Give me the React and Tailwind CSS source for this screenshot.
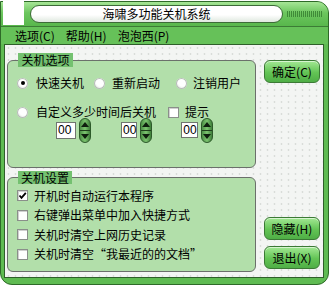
import React from "react";

function Radio({ checked }) {
  return (
    <span className="relative w-[11px] h-[11px] rounded-full shrink-0 bg-[radial-gradient(circle_at_60%_35%,#ffffff_0%,#ffffff_45%,#c9cfc9_100%)] shadow-[inset_0_0_0_1px_#b7bdb7] flex items-center justify-center">
      {checked && <span className="w-[4px] h-[4px] rounded-full bg-black" />}
    </span>
  );
}

function Check({ checked }) {
  return (
    <span className="w-[11px] h-[11px] shrink-0 bg-white border border-[#8a8f8a] shadow-[inset_1px_1px_0_#d0d0d0] flex items-center justify-center">
      {checked && (
        <svg width="9" height="9" viewBox="0 0 9 9">
          <polyline points="1.5,4.5 3.5,6.8 7.8,1.8" fill="none" stroke="#000" strokeWidth="1.8" />
        </svg>
      )}
    </span>
  );
}

function Spin() {
  return (
    <span className="w-[12px] h-[25px] rounded-full border border-[#2d5a2a] bg-[linear-gradient(90deg,#4c8f45,#7cc46f_50%,#3f7f3a)] flex flex-col items-center justify-between py-[3px] shrink-0">
      <svg width="8" height="5" viewBox="0 0 8 5"><polygon points="4,0 8,5 0,5" fill="#0f1f0e" /></svg>
      <span className="w-[10px] h-[1px] bg-[#1f3f1c]" />
      <svg width="8" height="5" viewBox="0 0 8 5"><polygon points="0,0 8,0 4,5" fill="#0f1f0e" /></svg>
    </span>
  );
}

function NumBox() {
  return (
    <span className="w-[20px] h-[17px] bg-white border border-[#6f756f] text-[12px] leading-[15px] pl-[1px] font-['Liberation_Sans',sans-serif] text-black">
      00
    </span>
  );
}

function Btn({ children }) {
  return (
    <div className="w-[56px] h-[23px] rounded-[6px] border border-[#3b7a35] bg-[linear-gradient(#a3e894,#63c455_55%,#4fae46)] shadow-[inset_0_1px_0_#d6f5cf] flex items-center justify-center text-[12px] text-black">
      {children}
    </div>
  );
}

export default function App() {
  return (
    <div className="w-[330px] h-[289px] bg-white relative overflow-hidden font-['Noto_Sans_CJK_SC','Noto_Sans',sans-serif] text-black">
      <div className="mt-[1px] w-[329px] h-[284px] border border-[#2e6a28] bg-[#5fbb52] rounded-tr-[12px] rounded-b-[12px] flex flex-col overflow-hidden">
        {/* Title bar */}
        <div className="h-[25px] shrink-0 border-b border-[#3c7c35] bg-[linear-gradient(#a6e596,#6cc65e_45%,#58b74c)] flex items-center">
          <div className="ml-[29px] w-[253px] h-[18px] rounded-full border border-[#3d6b38] bg-[linear-gradient(#ffffff,#ffffff_55%,#dfe8df)] flex items-center justify-center text-[12px] leading-none">
            海啸多功能关机系统
          </div>
          <div className="ml-[4px] w-[35px] h-[6px] bg-[repeating-linear-gradient(90deg,#3f8a38_0_1px,transparent_1px_2px)]" />
        </div>
        {/* Menu bar */}
        <div className="h-[17px] shrink-0 bg-[#66c159] flex items-center pl-[14px] gap-[11px] text-[12px] leading-none">
          <span>选项(C)</span>
          <span>帮助(H)</span>
          <span>泡泡西(P)</span>
        </div>
        {/* Content */}
        <div className="ml-[3px] mr-[4px] h-[234px] shrink-0 border border-[#2f5f2a] bg-[#f3f5f3] bg-[radial-gradient(#d9ddd9_1px,transparent_1.2px)] bg-[length:7px_6px] flex text-[12px] leading-none">
          {/* left column */}
          <div className="pl-[2px] w-[251px] flex flex-col">
            {/* group 1 */}
            <div className="relative mt-[15px] h-[108px] border border-[#6b706b] rounded-[6px] bg-[#b2dfaa]">
              <div className="absolute top-[-8px] left-[10px] h-[14px] w-[55px] bg-[#74c170] flex items-center justify-center text-[12px]">
                关机选项
              </div>
              <div className="mt-[15px] pl-[9px] flex items-center h-[14px]">
                <div className="w-[77px] flex items-center gap-[8px]"><Radio checked /><span>快速关机</span></div>
                <div className="w-[82px] flex items-center gap-[7px]"><Radio /><span>重新启动</span></div>
                <div className="flex items-center gap-[6px]"><Radio /><span>注销用户</span></div>
              </div>
              <div className="mt-[15px] pl-[9px] flex items-center h-[14px]">
                <div className="w-[151px] flex items-center gap-[8px]"><Radio /><span>自定义多少时间后关机</span></div>
                <div className="flex items-center gap-[6px]"><Check /><span>提示</span></div>
              </div>
              <div className="mt-[-1px] pl-[48px] flex items-center h-[25px]">
                <NumBox />
                <span className="ml-[3px]"><Spin /></span>
                <span className="ml-[30px]"><NumBox /></span>
                <span className="ml-[3px]"><Spin /></span>
                <span className="ml-[29px]"><NumBox /></span>
                <span className="ml-[3px]"><Spin /></span>
              </div>
            </div>
            {/* group 2 */}
            <div className="relative mt-[9px] h-[95px] border border-[#6b706b] rounded-[6px] bg-[#b2dfaa]">
              <div className="absolute top-[-7px] left-[10px] h-[13px] w-[54px] bg-[#74c170] flex items-center justify-center text-[12px]">
                关机设置
              </div>
              <div className="mt-[8px] pl-[9px] flex flex-col">
                <div className="h-[19.5px] flex items-center gap-[6px]"><Check checked /><span>开机时自动运行本程序</span></div>
                <div className="h-[19.5px] flex items-center gap-[6px]"><Check /><span>右键弹出菜单中加入快捷方式</span></div>
                <div className="h-[19.5px] flex items-center gap-[6px]"><Check /><span>关机时清空上网历史记录</span></div>
                <div className="h-[19.5px] flex items-center gap-[6px]"><Check /><span>关机时清空“我最近的的文档”</span></div>
              </div>
            </div>
          </div>
          {/* right column */}
          <div className="ml-[8px] pt-[15px] pb-[8px] flex flex-col">
            <Btn>确定(C)</Btn>
            <div className="flex-1" />
            <Btn>隐藏(H)</Btn>
            <div className="h-[6px]" />
            <Btn>退出(X)</Btn>
          </div>
        </div>
      </div>
      <div className="absolute left-[3px] top-0 w-[21px] h-[25px] bg-white" />
    </div>
  );
}
